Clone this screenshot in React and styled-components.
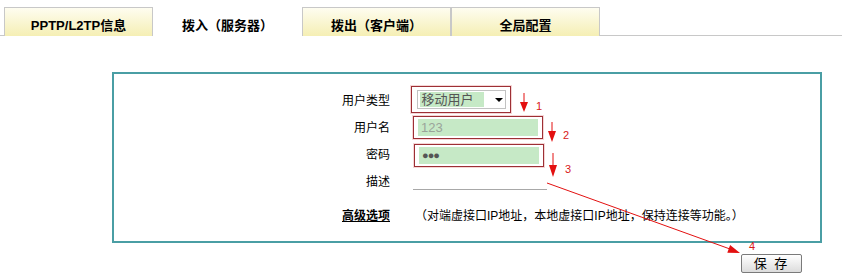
import React from 'react';
import styled, { createGlobalStyle } from 'styled-components';

const GlobalStyle = createGlobalStyle`
  body {
    margin: 0;
    background: #fff;
    font-family: "Liberation Sans", "Noto Sans CJK SC", sans-serif;
    color: #000;
  }
`;

const tabs = ['PPTP/L2TP信息', '拨入（服务器）', '拨出（客户端）', '全局配置'];

const App = () => (
  <Page>
    <GlobalStyle />
    <TabBar>
      {tabs.map((t, i) => (
        <Tab key={t} $active={i === 1}>
          {t}
        </Tab>
      ))}
    </TabBar>

    <FormBox>
      <Form>
        <Label>用户类型</Label>
        <Field>
          <Mark $w={100} $h={27}>
            <Select>
              <Chip>移动用户</Chip>
              <Caret />
            </Select>
          </Mark>
        </Field>

        <Label>用户名</Label>
        <Field $shift={2}>
          <Mark $w={130} $h={23} $left={2}>
            <Input $grey>123</Input>
          </Mark>
        </Field>

        <Label>密码</Label>
        <Field $shift={3}>
          <Mark $w={130} $h={23} $left={3}>
            <Input $dots>●●●</Input>
          </Mark>
        </Field>

        <Label>描述</Label>
        <Field>
          <Underline />
        </Field>

        <Label $bold $tall>高级选项</Label>
        <Field $tall>
          <Note>（对端虚接口IP地址，本地虚接口IP地址，保持连接等功能。）</Note>
        </Field>
      </Form>
    </FormBox>

    <Footer>
      <SaveButton>保 存</SaveButton>
    </Footer>

    <Marks viewBox="0 0 842 280">
      <g stroke="#e31010" strokeWidth="1" fill="#e31010">
        <line x1="524" y1="93" x2="524" y2="103" />
        <polygon points="520,102 528,102 524,112" stroke="none" />
        <line x1="552" y1="122" x2="552" y2="132" />
        <polygon points="548,131 556,131 552,142" stroke="none" />
        <line x1="553" y1="153" x2="553" y2="166" />
        <polygon points="549,165 557,165 553,177" stroke="none" />
        <line x1="547" y1="183" x2="730" y2="249" />
        <polygon points="727.3,252.7 730.1,245.1 740,253" stroke="none" />
      </g>
      <g fill="#d81818" fontSize="11" fontFamily="Liberation Sans, sans-serif">
        <text x="536" y="110">1</text>
        <text x="563" y="139">2</text>
        <text x="565" y="173">3</text>
        <text x="749" y="250">4</text>
      </g>
    </Marks>
  </Page>
);

export default App;

const Page = styled.div`
  position: relative;
  width: 842px;
  height: 280px;
  overflow: hidden;
`;

const TabBar = styled.div`
  display: flex;
  height: 36px;
  box-sizing: border-box;
  padding: 7px 0 0 4px;
  border-bottom: 1px solid #c8c8c8;
`;

const Tab = styled.div`
  display: flex;
  justify-content: center;
  align-items: center;
  width: 149px;
  height: 29px;
  box-sizing: border-box;
  padding-top: 4px;
  border: 1px solid ${(p) => (p.$active ? '#fff' : '#c8c8c8')};
  border-bottom: none;
  background: ${(p) =>
    p.$active ? '#fff' : 'linear-gradient(to bottom, #fefdf0, #f5efb4)'};
  font-size: 13px;
  font-weight: 700;
  color: #000;
`;

const FormBox = styled.div`
  width: 710px;
  height: 171px;
  box-sizing: border-box;
  margin: 36px 0 0 112px;
  border: 2px solid #4a9ea4;
`;

const Form = styled.div`
  display: grid;
  grid-template-columns: 276px 1fr;
  grid-auto-rows: 27px;
  column-gap: 21px;
  padding-top: 12px;
`;

const Label = styled.div`
  display: flex;
  justify-content: flex-end;
  align-items: center;
  font-size: 12px;
  font-weight: ${(p) => (p.$bold ? 700 : 400)};
  text-decoration: ${(p) => (p.$bold ? 'underline' : 'none')};
  ${(p) => p.$tall && 'margin-top: 14px;'}
`;

const Field = styled.div`
  display: flex;
  align-items: center;
  ${(p) => p.$shift && `padding-top: ${p.$shift}px;`}
  ${(p) => p.$tall && 'margin-top: 14px;'}
`;

const Mark = styled.div`
  display: flex;
  align-items: center;
  justify-content: center;
  width: ${(p) => p.$w}px;
  height: ${(p) => p.$h}px;
  box-sizing: border-box;
  margin-left: ${(p) => p.$left || 0}px;
  border: 1px solid #9d2f35;
  box-shadow: 0 0 0 1px #f5d6d6;
`;

const Select = styled.div`
  display: flex;
  align-items: center;
  width: 89px;
  height: 19px;
  box-sizing: border-box;
  padding: 0 2px;
  border: 1px solid #c2c2c2;
  background: #fff;
`;

const Chip = styled.span`
  width: 66px;
  padding-left: 2px;
  background: #c6e9c6;
  font-size: 13px;
  line-height: 15px;
  color: #555;
`;

const Caret = styled.span`
  margin-left: 11px;
  border-left: 4px solid transparent;
  border-right: 4px solid transparent;
  border-top: 4px solid #000;
`;

const Input = styled.div`
  display: flex;
  align-items: center;
  width: 120px;
  height: 17px;
  box-sizing: border-box;
  padding-left: 3px;
  background: #c6e9c6;
  font-size: ${(p) => (p.$dots ? '11px' : '13px')};
  letter-spacing: ${(p) => (p.$dots ? '-1px' : '0')};
  color: ${(p) => (p.$grey ? '#9aa49a' : '#555')};
`;

const Underline = styled.div`
  width: 134px;
  height: 17px;
  margin-left: 2px;
  border-bottom: 1px solid #a8a8a8;
`;

const Note = styled.span`
  margin-left: 4px;
  font-size: 12px;
  color: #000;
`;

const Footer = styled.div`
  display: flex;
  padding: 11px 0 0 741px;
`;

const SaveButton = styled.button`
  width: 61px;
  height: 19px;
  padding: 0;
  border: 1px solid #7a7a7a;
  border-radius: 2px;
  background: linear-gradient(to bottom, #ffffff, #dcdcdc);
  font-family: "Liberation Sans", "Noto Sans CJK SC", sans-serif;
  font-size: 13px;
  line-height: 17px;
  letter-spacing: 2px;
  color: #000;
`;

const Marks = styled.svg`
  position: absolute;
  top: 0;
  left: 0;
  width: 842px;
  height: 280px;
  pointer-events: none;
`;
